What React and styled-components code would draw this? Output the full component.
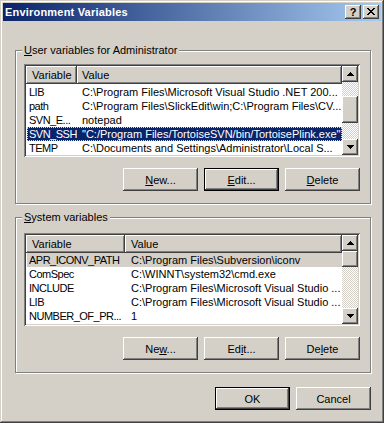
import React from 'react';
import styled, { createGlobalStyle } from 'styled-components';

const Global = createGlobalStyle`
  html, body { margin: 0; padding: 0; background: #d4d0c8; }
  body { font-family: "Liberation Sans", Arial, sans-serif; font-size: 11px; color: #000; }
  * { box-sizing: border-box; }
`;

const raised = `
  box-shadow: inset -1px -1px #404040, inset 1px 1px #ffffff, inset -2px -2px #808080, inset 2px 2px #d4d0c8;
`;

const Window = styled.div`
  width: 384px;
  height: 423px;
  background: #d4d0c8;
  padding: 3px;
  box-shadow: inset -1px -1px #404040, inset 1px 1px #d4d0c8, inset -2px -2px #808080, inset 2px 2px #ffffff;
  display: flex;
  flex-direction: column;
`;

const TitleBar = styled.div`
  height: 18px;
  flex: none;
  display: flex;
  align-items: center;
  padding: 0 2px 0 2px;
  background: linear-gradient(to right, #0a246a, #a6caf0);
`;

const TitleText = styled.div`
  flex: 1;
  color: #fff;
  font-weight: bold;
  font-size: 11px;
  line-height: 18px;
  white-space: nowrap;
  letter-spacing: 0.2px;
`;

const CaptionButtons = styled.div`
  display: flex;
  gap: 2px;
`;

const CaptionButton = styled.div`
  width: 16px;
  height: 14px;
  background: #d4d0c8;
  ${raised}
  display: flex;
  align-items: center;
  justify-content: center;
  font-weight: bold;
  font-size: 11px;
  line-height: 14px;
  padding-bottom: 1px;
`;

const Client = styled.div`
  flex: 1;
  display: flex;
  flex-direction: column;
  padding-left: 12px;
`;

const Group = styled.div`
  position: relative;
  width: 356px;
  margin-top: ${p => p.$mt}px;
  border: 1px solid #808080;
  box-shadow: 1px 1px 0 #ffffff, inset 1px 1px 0 #ffffff;
  padding: ${p => p.$pt}px 10px 12px 8px;
  display: flex;
  flex-direction: column;
`;

const Legend = styled.div`
  position: absolute;
  top: -8px;
  left: 6px;
  padding: 0 2px;
  background: #d4d0c8;
  line-height: 14px;
  white-space: nowrap;
`;

const List = styled.div`
  width: 336px;
  height: 93px;
  padding: 2px;
  background: #fff;
  box-shadow: inset 1px 1px #808080, inset -1px -1px #ffffff, inset 2px 2px #404040, inset -2px -2px #d4d0c8;
  display: flex;
`;

const ListBody = styled.div`
  flex: 1;
  display: flex;
  flex-direction: column;
  overflow: hidden;
`;

const Header = styled.div`
  display: flex;
  height: 18px;
  flex: none;
  background: #d4d0c8;
  margin-bottom: ${p => p.$gap}px;
`;

const HeaderCell = styled.div`
  width: ${p => (p.$w ? `${p.$w}px` : 'auto')};
  flex: ${p => (p.$w ? 'none' : '1')};
  ${raised}
  line-height: 18px;
  padding-left: ${p => p.$pl}px;
  white-space: nowrap;
  overflow: hidden;
`;

const Row = styled.div`
  display: flex;
  height: 14px;
  flex: none;
  line-height: 14px;
  margin-left: 1px;
  white-space: nowrap;
  background: ${p => (p.$sel === 'focus' ? '#0a246a' : p.$sel === 'inactive' ? '#d4d0c8' : 'transparent')};
  color: ${p => (p.$sel === 'focus' ? '#fff' : '#000')};
  outline: ${p => (p.$sel === 'focus' ? '1px dotted #f5db95' : 'none')};
  outline-offset: -1px;
`;

const Cell = styled.div`
  width: ${p => (p.$w ? `${p.$w}px` : 'auto')};
  flex: ${p => (p.$w ? 'none' : '1')};
  padding-left: ${p => p.$pl}px;
  letter-spacing: ${p => (p.$tight ? '-0.5px' : 'normal')};
  overflow: hidden;
`;

const ScrollBar = styled.div`
  width: 16px;
  flex: none;
  display: flex;
  flex-direction: column;
`;

const ScrollButton = styled.div`
  width: 16px;
  height: 16px;
  flex: none;
  background: #d4d0c8;
  ${raised}
  display: flex;
  align-items: center;
  justify-content: center;
`;

const Track = styled.div`
  flex: 1;
  display: flex;
  flex-direction: column;
  background-color: #fff;
  background-image: repeating-conic-gradient(#d4d0c8 0% 25%, #ffffff 0% 50%);
  background-size: 2px 2px;
`;

const TrackGap = styled.div`
  height: ${p => p.$h}px;
  flex: none;
`;

const Thumb = styled.div`
  height: ${p => p.$h}px;
  flex: none;
  background: #d4d0c8;
  ${raised}
`;

const ButtonRow = styled.div`
  display: flex;
  justify-content: flex-end;
  gap: 6px;
  margin-top: ${p => p.$mt}px;
  width: ${p => (p.$w ? `${p.$w}px` : 'auto')};
`;

const Button = styled.div`
  width: 75px;
  height: 23px;
  background: #d4d0c8;
  display: flex;
  align-items: center;
  justify-content: center;
  line-height: 14px;
  ${p =>
    p.$default
      ? `border: 1px solid #000; box-shadow: inset -1px -1px #404040, inset 1px 1px #ffffff, inset -2px -2px #808080;`
      : raised}
`;

const UpArrow = () => (
  <svg width="7" height="4" viewBox="0 0 7 4" shapeRendering="crispEdges">
    <path d="M3 0h1v1h1v1h1v1h1v1H0V3h1V2h1V1h1z" fill="#000" />
  </svg>
);

const DownArrow = () => (
  <svg width="7" height="4" viewBox="0 0 7 4" shapeRendering="crispEdges">
    <path d="M0 0h7v1H6v1H5v1H4v1H3V3H2V2H1V1H0z" fill="#000" />
  </svg>
);

const CloseGlyph = () => (
  <svg width="8" height="7" viewBox="0 0 8 7" shapeRendering="crispEdges">
    <path
      d="M0 0h2v1H0z M6 0h2v1H6z M1 1h2v1H1z M5 1h2v1H5z M2 2h4v1H2z M3 3h2v1H3z M2 4h4v1H2z M1 5h2v1H1z M5 5h2v1H5z M0 6h2v1H0z M6 6h2v1H6z"
      fill="#000"
    />
  </svg>
);

const Scroll = ({ gap, thumb }) => (
  <ScrollBar>
    <ScrollButton>
      <UpArrow />
    </ScrollButton>
    <Track>
      <TrackGap $h={gap} />
      <Thumb $h={thumb} />
    </Track>
    <ScrollButton>
      <DownArrow />
    </ScrollButton>
  </ScrollBar>
);

const userRows = [
  ['LIB', 'C:\\Program Files\\Microsoft Visual Studio .NET 200...'],
  ['path', 'C:\\Program Files\\SlickEdit\\win;C:\\Program Files\\CV...'],
  ['SVN_E...', 'notepad'],
  ['SVN_SSH', '"C:/Program Files/TortoiseSVN/bin/TortoisePlink.exe"', 'focus'],
  ['TEMP', 'C:\\Documents and Settings\\Administrator\\Local S...'],
];

const systemRows = [
  ['APR_ICONV_PATH', 'C:\\Program Files\\Subversion\\iconv', 'inactive'],
  ['ComSpec', 'C:\\WINNT\\system32\\cmd.exe'],
  ['INCLUDE', 'C:\\Program Files\\Microsoft Visual Studio ...'],
  ['LIB', 'C:\\Program Files\\Microsoft Visual Studio ...'],
  ['NUMBER_OF_PR...', '1'],
];

const VarList = ({ rows, col, valuePad, gap, thumbGap, thumb }) => (
  <List>
    <ListBody>
      <Header $gap={gap}>
        <HeaderCell $w={col + 1} $pl={6}>Variable</HeaderCell>
        <HeaderCell $pl={valuePad}>Value</HeaderCell>
      </Header>
      {rows.map(([name, value, sel]) => (
        <Row key={name + value} $sel={sel}>
          <Cell $w={col} $pl={2} $tight>{name}</Cell>
          <Cell $pl={valuePad}>{value}</Cell>
        </Row>
      ))}
    </ListBody>
    <Scroll gap={thumbGap} thumb={thumb} />
  </List>
);

export default function App() {
  return (
    <>
      <Global />
      <Window>
        <TitleBar>
          <TitleText>Environment Variables</TitleText>
          <CaptionButtons>
            <CaptionButton>?</CaptionButton>
            <CaptionButton>
              <CloseGlyph />
            </CaptionButton>
          </CaptionButtons>
        </TitleBar>
        <Client>
          <Group $mt={29} $pt={13}>
            <Legend>
              <u>U</u>ser variables for Administrator
            </Legend>
            <VarList rows={userRows} col={50} valuePad={5} gap={1} thumbGap={14} thumb={27} />
            <ButtonRow $mt={11}>
              <Button>
                <span><u>N</u>ew...</span>
              </Button>
              <Button $default>
                <span><u>E</u>dit...</span>
              </Button>
              <Button>
                <span><u>D</u>elete</span>
              </Button>
            </ButtonRow>
          </Group>
          <Group $mt={13} $pt={15}>
            <Legend>
              <u>S</u>ystem variables
            </Legend>
            <VarList rows={systemRows} col={98} valuePad={6} gap={0} thumbGap={0} thumb={16} />
            <ButtonRow $mt={11}>
              <Button>
                <span>Ne<u>w</u>...</span>
              </Button>
              <Button>
                <span>Ed<u>i</u>t...</span>
              </Button>
              <Button>
                <span>De<u>l</u>ete</span>
              </Button>
            </ButtonRow>
          </Group>
          <ButtonRow $mt={14} $w={356}>
            <Button $default>OK</Button>
            <Button>Cancel</Button>
          </ButtonRow>
        </Client>
      </Window>
    </>
  );
}
